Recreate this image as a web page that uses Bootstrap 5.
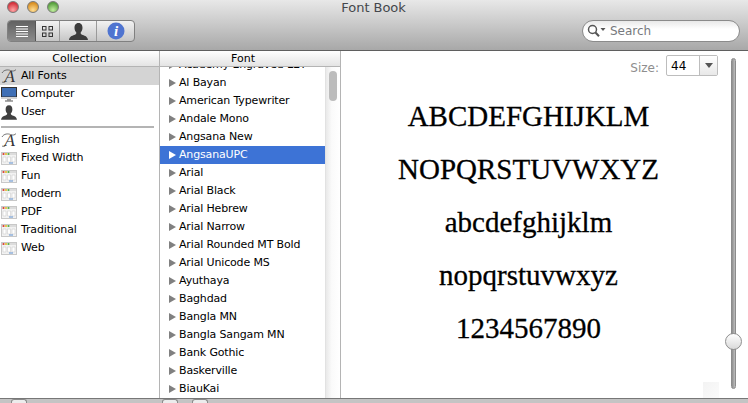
<!DOCTYPE html>
<html lang="en"><head><meta charset="utf-8"><title>Font Book</title>
<link href="https://cdn.jsdelivr.net/npm/bootstrap@5.3.0/dist/css/bootstrap.min.css" rel="stylesheet">
<style>
html,body{width:748px;height:403px;overflow:hidden;background:#fff;}
body{font-family:"DejaVu Sans","Liberation Sans",sans-serif;font-size:11px;color:#000;}
.fb-win{width:748px;height:403px;}
.fb-top{height:51px;background:linear-gradient(#e8e8e8,#a8a8a8);border-bottom:1px solid #5f5f5f;flex:none;padding:0 8px 0 7px;position:relative;}
.fb-title{height:15px;font-size:13px;line-height:15px;color:#44474c;text-align:center;letter-spacing:-.05px;}
.fb-lights{gap:8px;position:absolute;left:7px;top:1px;}
.fb-light{width:12px;height:12px;border-radius:50%;border:1px solid #7a7a7a;}
.fb-red{background:radial-gradient(circle at 50% 80%,#ffa5a5,#d3303a 75%);}
.fb-amber{background:radial-gradient(circle at 50% 80%,#ffdf95,#d98f22 75%);}
.fb-green{background:radial-gradient(circle at 50% 80%,#c2ee9f,#559f3c 75%);}
.fb-tools{margin-top:5px;height:22px;}
.fb-seg{height:22px;width:128px;border:1px solid #808080;border-radius:4px;background:linear-gradient(#f2f2f2,#c6c6c6);overflow:hidden;}
.fb-segbtn{height:100%;border-right:1px solid #9a9a9a;}
.fb-segbtn:last-child{border-right:0;}
.fb-s1{width:28px;background:linear-gradient(#626262,#8a8a8a);border-right:1px solid #555;}
.fb-s2{width:24px;}.fb-s3{width:37px;}.fb-s4{width:37px;}
.fb-search{width:158px;height:22px;border:1px solid #8b8b8b;border-radius:11px;background:linear-gradient(#e9e9e9,#fff 40%);padding-left:4px;color:#77797d;font-size:12px;gap:4px;}
.fb-body{height:347px;min-height:0;flex:none;}
.fb-col1{width:160px;border-right:1px solid #b4b4b4;flex:none;}
.fb-col2{width:181px;border-right:1px solid #b4b4b4;flex:none;position:relative;}
.fb-head{height:16px;flex:none;background:linear-gradient(#fff,#e4e4e4);border-bottom:1px solid #b4b4b4;text-align:center;line-height:15px;}
.fb-head-f{padding-right:14px;}
.fb-list{padding:0;margin:0;list-style:none;}
.fb-row{height:18px;line-height:18px;display:flex;align-items:center;white-space:nowrap;letter-spacing:-.15px;}
.fb-c{padding-left:1px;gap:4px;}
.fb-c svg{flex:none;}
.fb-c.fb-on{background:#d4d4d4;}
.fb-rule{height:2px;background:#b4b4b4;margin:5px 5px 3px 1px;}
.fb-fontwrap{flex:1;min-height:0;overflow:hidden;}
.fb-fonts{margin-top:-11px;}
.fb-f{padding-left:9px;gap:3px;}
.fb-tri{width:0;height:0;border-left:7px solid #808080;border-top:4.5px solid transparent;border-bottom:4.5px solid transparent;flex:none;}
.fb-f.fb-on{background:#3d73d6;color:#fff;}
.fb-f.fb-on .fb-tri{border-left-color:#fff;}
.fb-bar{width:15px;flex:none;background:linear-gradient(90deg,#e9e9e9,#fafafa 40%,#fff);border-left:1px solid #e2e2e2;padding:4px 3px;}
.fb-thumb{width:8px;height:30px;border-radius:4px;background:#bcbcbc;}
.fb-pre{flex:1;min-width:0;position:relative;}
.fb-size{height:25px;padding-top:4px;margin-right:30px;color:#8e8e8e;gap:7px;font-size:12px;}
.fb-sel{width:52px;height:21px;border:1px solid #bdbdbd;border-radius:2px;color:#000;padding-left:4px;background:#fff;}
.fb-sel b{font-weight:400;flex:1;padding-top:1px;}
.fb-arrow{width:18px;height:100%;border-left:1px solid #bdbdbd;background:linear-gradient(#fff,#e8e8e8);}
.fb-arrow i{width:0;height:0;border-top:5px solid #555;border-left:4px solid transparent;border-right:4px solid transparent;display:block;}
.fb-sample{font-family:"Liberation Serif",serif;font-size:29px;line-height:53px;width:375px;text-align:center;padding-top:14px;-webkit-text-stroke:.3px #000;}
.fb-track{position:absolute;left:390px;top:7px;width:5px;height:331px;border-radius:3px;background:linear-gradient(90deg,#8e8e8e,#bdbdbd);border:1px solid #8c8c8c;}
.fb-knob{position:absolute;left:384px;top:282px;width:17px;height:17px;border-radius:50%;border:1px solid #8f8f8f;background:linear-gradient(#fff,#d9d9d9);}
.fb-grip{position:absolute;left:362px;top:331px;width:16px;height:16px;background:linear-gradient(135deg,#f3f3f3,#fbfbfb);}
.fb-bottom{height:5px;flex:none;background:#c4c4c4;border-top:1px solid #777;position:relative;}
.fb-mini{position:absolute;top:0;height:4px;border:1px solid #8a8a8a;border-bottom:0;border-radius:3px 3px 0 0;background:#ececec;width:16px;}
.fb-m1{left:11px}.fb-m2{left:162px}.fb-m3{left:192px}
</style></head><body>
<div class="fb-win d-flex flex-column">
 <header class="fb-top">
  <div class="fb-lights d-flex"><span class="fb-light fb-red"></span><span class="fb-light fb-amber"></span><span class="fb-light fb-green"></span></div>
  <div class="fb-title">Font Book</div>
  <div class="fb-tools d-flex justify-content-between align-items-center">
   <div class="fb-seg d-flex">
    <div class="fb-segbtn fb-s1 d-flex align-items-center justify-content-center"><svg width="12" height="11"><path d="M0 .5h12M0 3h12M0 5.500h12M0 8h12M0 10.500h12" stroke="#fff" stroke-width="1"/></svg></div>
    <div class="fb-segbtn fb-s2 d-flex align-items-center justify-content-center"><svg width="11" height="11" fill="none" stroke="#333"><rect x=".5" y=".5" width="3.500" height="3.500"/><rect x="7" y=".5" width="3.500" height="3.500"/><rect x=".5" y="7" width="3.500" height="3.500"/><rect x="7" y="7" width="3.500" height="3.500"/></svg></div>
    <div class="fb-segbtn fb-s3 d-flex align-items-center justify-content-center"><svg width="19" height="17" viewBox="0 0 19 17"><use href="#fb-person" fill="#3c3c3c"/></svg></div>
    <div class="fb-segbtn fb-s4 d-flex align-items-center justify-content-center"><svg width="18" height="18" viewBox="0 0 18 18"><circle cx="9" cy="9" r="8.500" fill="#4f74d0"/><text x="9" y="14" text-anchor="middle" font-family="Liberation Serif" font-weight="700" font-style="italic" font-size="15" fill="#fff">i</text></svg></div>
   </div>
   <div class="fb-search d-flex align-items-center">
    <svg width="19" height="14" viewBox="0 0 19 14" fill="none"><circle cx="5.500" cy="5.500" r="4" stroke="#555" stroke-width="1.500"/><path d="M8.500 8.500l3.500 3.800" stroke="#555" stroke-width="2"/><path d="M13.500 4h5l-2.500 3z" fill="#555"/></svg><span>Search</span>
   </div>
  </div>
 </header>
 <main class="fb-body d-flex">
  <section class="fb-col1 d-flex flex-column">
   <div class="fb-head">Collection</div>
   <ul class="fb-list">
    <li class="fb-row fb-c fb-on"><svg width="16" height="16"><use href="#fb-script"/></svg>All Fonts</li>
    <li class="fb-row fb-c"><svg width="16" height="15" viewBox="0 0 16 15"><rect x=".5" y=".5" width="15" height="9.500" fill="#3f6fb5" stroke="#333"/><rect x="0" y="10" width="16" height="2" fill="#d2d2d2"/><path d="M6 12h4v1.500H6z" fill="#999"/><path d="M4 13.500h8v1H4z" fill="#555"/></svg>Computer</li>
    <li class="fb-row fb-c"><svg width="16" height="15" viewBox="0 0 19 17"><use href="#fb-person" fill="#404040"/></svg>User</li>
   </ul>
   <div class="fb-rule"></div>
   <ul class="fb-list">
    <li class="fb-row fb-c"><svg width="16" height="16"><use href="#fb-script"/></svg>English</li>
    <li class="fb-row fb-c"><svg width="16" height="15"><use href="#fb-book"/></svg>Fixed Width</li>
    <li class="fb-row fb-c"><svg width="16" height="15"><use href="#fb-book"/></svg>Fun</li>
    <li class="fb-row fb-c"><svg width="16" height="15"><use href="#fb-book"/></svg>Modern</li>
    <li class="fb-row fb-c"><svg width="16" height="15"><use href="#fb-book"/></svg>PDF</li>
    <li class="fb-row fb-c"><svg width="16" height="15"><use href="#fb-book"/></svg>Traditional</li>
    <li class="fb-row fb-c"><svg width="16" height="15"><use href="#fb-book"/></svg>Web</li>
   </ul>
  </section>
  <section class="fb-col2 d-flex flex-column">
   <div class="fb-head fb-head-f">Font</div>
   <div class="d-flex flex-grow-1 overflow-hidden">
    <div class="fb-fontwrap">
     <ul class="fb-list fb-fonts">
      <li class="fb-row fb-f"><i class="fb-tri"></i>Academy Engraved LET</li>
      <li class="fb-row fb-f"><i class="fb-tri"></i>Al Bayan</li>
      <li class="fb-row fb-f"><i class="fb-tri"></i>American Typewriter</li>
      <li class="fb-row fb-f"><i class="fb-tri"></i>Andale Mono</li>
      <li class="fb-row fb-f"><i class="fb-tri"></i>Angsana New</li>
      <li class="fb-row fb-f fb-on"><i class="fb-tri"></i>AngsanaUPC</li>
      <li class="fb-row fb-f"><i class="fb-tri"></i>Arial</li>
      <li class="fb-row fb-f"><i class="fb-tri"></i>Arial Black</li>
      <li class="fb-row fb-f"><i class="fb-tri"></i>Arial Hebrew</li>
      <li class="fb-row fb-f"><i class="fb-tri"></i>Arial Narrow</li>
      <li class="fb-row fb-f"><i class="fb-tri"></i>Arial Rounded MT Bold</li>
      <li class="fb-row fb-f"><i class="fb-tri"></i>Arial Unicode MS</li>
      <li class="fb-row fb-f"><i class="fb-tri"></i>Ayuthaya</li>
      <li class="fb-row fb-f"><i class="fb-tri"></i>Baghdad</li>
      <li class="fb-row fb-f"><i class="fb-tri"></i>Bangla MN</li>
      <li class="fb-row fb-f"><i class="fb-tri"></i>Bangla Sangam MN</li>
      <li class="fb-row fb-f"><i class="fb-tri"></i>Bank Gothic</li>
      <li class="fb-row fb-f"><i class="fb-tri"></i>Baskerville</li>
      <li class="fb-row fb-f"><i class="fb-tri"></i>BiauKai</li>
     </ul>
    </div>
    <div class="fb-bar"><div class="fb-thumb"></div></div>
   </div>
  </section>
  <section class="fb-pre">
   <div class="fb-size d-flex justify-content-end align-items-start">
    <span class="pt-1">Size:</span>
    <div class="fb-sel d-flex align-items-center"><b>44</b><span class="fb-arrow d-flex align-items-center justify-content-center"><i></i></span></div>
   </div>
   <div class="fb-sample">ABCDEFGHIJKLM<br>NOPQRSTUVWXYZ<br>abcdefghijklm<br>nopqrstuvwxyz<br>1234567890</div>
   <div class="fb-track"></div><div class="fb-knob"></div><div class="fb-grip"></div>
  </section>
 </main>
 <footer class="fb-bottom"><span class="fb-mini fb-m1"></span><span class="fb-mini fb-m2"></span><span class="fb-mini fb-m3"></span></footer>
</div>
<svg width="0" height="0" class="position-absolute"><defs>
<path id="fb-person" d="M9.500 0c3 0 4 2.400 4 4.800 0 2-.8 3.600-1.800 4.600-.2 1.200.3 2 2 2.600 2.500.9 4.800 1.700 5.300 5H0c.5-3.300 2.800-4.100 5.300-5 1.700-.6 2.200-1.400 2-2.600-1-1-1.800-2.600-1.800-4.600 0-2.400 1-4.800 4-4.800z"/>
<g id="fb-script"><text x="8.500" y="14" text-anchor="middle" font-family="Liberation Serif" font-style="italic" font-size="17" fill="#333">A</text><path d="M1 5C3 1.500 7 1.500 9.500 2.500S14 3 15 1.500M1 14c2 1 3 .5 4-1" fill="none" stroke="#555" stroke-width=".8"/></g>
<g id="fb-book"><rect x=".5" y="1.500" width="15" height="12" fill="#f2f2f2" stroke="#c8c8c8"/><rect x="1" y="2" width="14" height="2" fill="#dcdcdc"/><circle cx="2.500" cy="3" r="1" fill="#e03a2e"/><circle cx="5" cy="3" r="1" fill="#e8c020"/><circle cx="7.500" cy="3" r="1" fill="#50b040"/><path d="M2 6h3v5H2zM6.500 6h3v5h-3zM11 6h3v5h-3z" fill="#fff" stroke="#cfcfcf" stroke-width=".6"/><path d="M8 12h4" stroke="#5c8fd0"/></g>
</defs></svg>
</body></html>
